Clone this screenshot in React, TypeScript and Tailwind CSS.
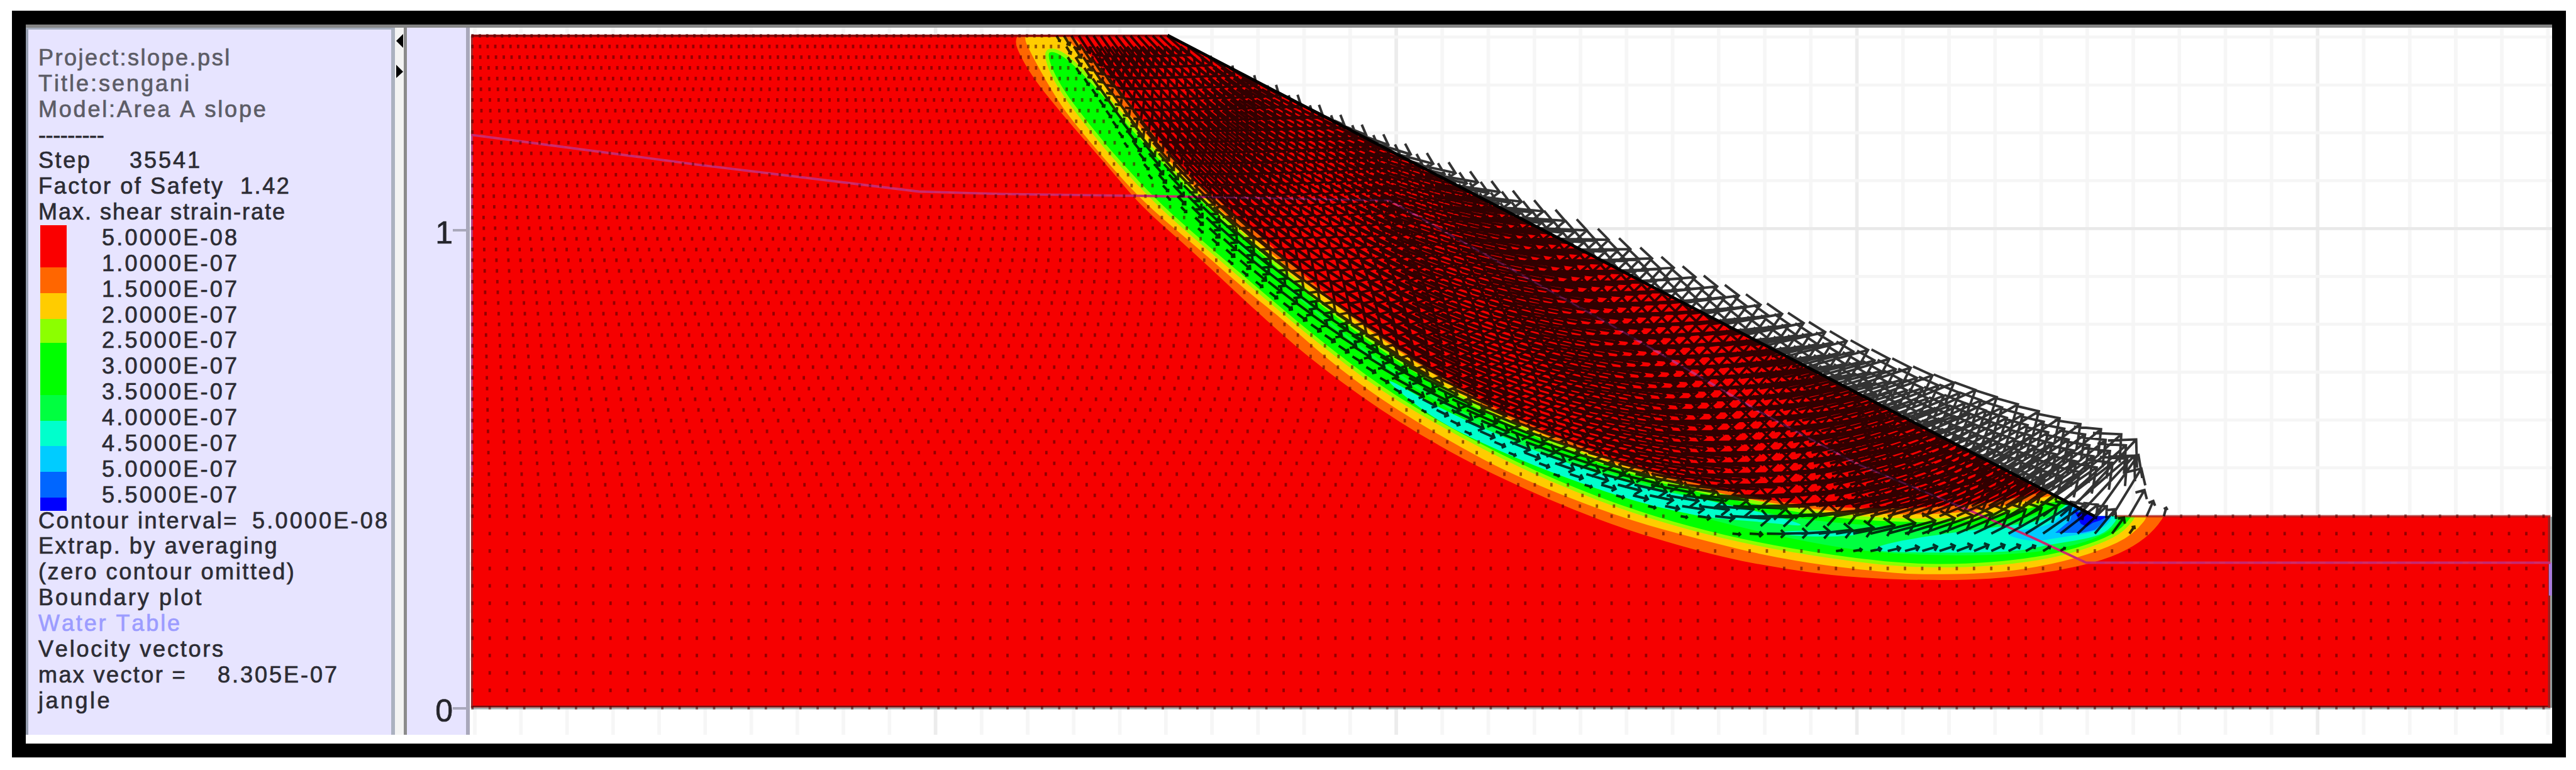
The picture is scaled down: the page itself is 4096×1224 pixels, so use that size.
import React from "react";

const legend = [
  "5.0000E-08",
  "1.0000E-07",
  "1.5000E-07",
  "2.0000E-07",
  "2.5000E-07",
  "3.0000E-07",
  "3.5000E-07",
  "4.0000E-07",
  "4.5000E-07",
  "5.0000E-07",
  "5.5000E-07",
];

const swatches = [
  "h-[67px] bg-[#fa0000]",
  "h-[41px] bg-[#ff6600]",
  "h-[41px] bg-[#ffcc00]",
  "h-[38px] bg-[#8cff00]",
  "h-[83px] bg-[#00ff00]",
  "h-[41px] bg-[#00ff40]",
  "h-[40px] bg-[#00ffcc]",
  "h-[41px] bg-[#00ccff]",
  "h-[41px] bg-[#0066ff]",
  "h-[21px] bg-[#0000ff]",
];

type Point = [number, number];

// Plot geometry
const LEFT = 790;
const RIGHT = 4275;
const TOP = 59;
const BENCH = 865;
const BASE = 1186;
const CREST = 1957;
const TOE = 3511;

// Slip circle
const CX = 3250;
const CY = -801;
const R = 1772;

const orange: Point[] = [
  [1692, 50], [1720, 116], [1784, 196], [1858, 280], [1912, 345], [2002, 424], [2105, 521],
  [2208, 612], [2355, 715], [2504, 797], [2688, 876], [2860, 928], [2980, 952], [3095, 967],
  [3210, 972], [3296, 972], [3376, 967], [3451, 956], [3526, 939], [3577, 916], [3612, 888],
  [3636, 852], [3540, 800], [3434, 822], [3388, 833], [3330, 843], [3244, 850], [3130, 853], [3015, 846],
  [2918, 829], [2745, 785], [2602, 729], [2487, 675], [2381, 609], [2289, 544], [2208, 481],
  [2134, 414], [2076, 364], [2002, 303], [1939, 234], [1875, 146], [1830, 97], [1792, 50],
];

const yellow: Point[] = [
  [1709, 50], [1736, 105], [1772, 167], [1801, 207], [1870, 288], [1927, 348], [2013, 420],
  [2088, 486], [2151, 536], [2225, 602], [2315, 670], [2430, 740], [2544, 800], [2717, 868],
  [2860, 907], [2960, 931], [3061, 948], [3153, 958], [3210, 963], [3342, 961], [3440, 946],
  [3520, 923], [3577, 896], [3610, 852], [3540, 810], [3450, 828], [3380, 843], [3302, 858], [3216, 863],
  [3089, 859], [2990, 846], [2900, 831], [2831, 813], [2717, 780], [2602, 736], [2487, 681],
  [2340, 586], [2231, 506], [2151, 442], [2094, 392], [2020, 331], [1960, 270], [1896, 196],
  [1840, 125], [1785, 60], [1775, 50],
];

const green: Point[] = [
  [1750, 88], [1772, 142], [1824, 211], [1876, 273], [1944, 345], [2030, 420], [2117, 494],
  [2205, 568], [2315, 652], [2430, 720], [2544, 779], [2659, 829], [2774, 869], [2889, 900],
  [3004, 923], [3130, 941], [3210, 948], [3296, 948], [3376, 942], [3451, 930], [3520, 909],
  [3560, 888], [3586, 852], [3540, 830], [3470, 830], [3440, 839], [3376, 855], [3302, 870], [3216, 873],
  [3089, 867], [2975, 849], [2831, 819], [2717, 787], [2602, 742], [2487, 688], [2372, 622],
  [2286, 562], [2200, 497], [2094, 403], [2025, 345], [1973, 294], [1904, 222], [1853, 160],
  [1800, 104], [1768, 82],
];

const spring: Point[] = [
  [1965, 326], [2060, 395], [2160, 486], [2260, 570], [2370, 650], [2500, 728], [2640, 797],
  [2780, 847], [2920, 885], [3080, 918], [3190, 930], [3370, 931], [3480, 915], [3540, 890],
  [3560, 862], [3480, 842], [3400, 868], [3290, 884], [3140, 882], [3000, 868], [2860, 838],
  [2700, 795], [2540, 733], [2400, 664], [2270, 574], [2150, 474], [2060, 392],
];

const aqua: Point[][] = [
  [
    [2305, 622], [2401, 678], [2515, 731], [2630, 778], [2745, 814], [2860, 838], [2960, 860],
    [3040, 884], [2946, 874], [2860, 868], [2745, 842], [2630, 803], [2515, 757], [2401, 702],
  ],
  [[2976, 889], [3120, 889], [3110, 899], [3000, 899]],
  [
    [3131, 922], [3176, 907], [3290, 890], [3359, 882], [3434, 871], [3463, 845], [3480, 835],
    [3556, 858], [3535, 890], [3503, 902], [3434, 913], [3371, 926], [3187, 926],
  ],
];

const sky: Point[] = [
  [3349, 892], [3440, 882], [3463, 850], [3480, 838], [3548, 858], [3524, 890], [3451, 901], [3405, 909],
];
const blue: Point[] = [[3445, 893], [3470, 872], [3476, 850], [3540, 862], [3512, 888], [3490, 893]];
const navy: Point[] = [[3478, 858], [3500, 860], [3535, 864], [3520, 872], [3508, 876], [3498, 883], [3488, 878]];

const waterTable: Point[] = [
  [790, 226], [1170, 276], [1540, 321], [1680, 325], [1900, 328], [2329, 336], [2478, 420],
  [2717, 554], [2946, 688], [3112, 777], [3296, 853], [3405, 900], [3497, 943], [4275, 943],
];

// Direction and length of the vectors along the free surface
const surface = [
  { x: 1700, angle: 1.1, length: 34 },
  { x: 1850, angle: 0.95, length: 44 },
  { x: 1990, angle: 0.66, length: 50 },
  { x: 2100, angle: 0.5, length: 56 },
  { x: 2250, angle: 0.37, length: 62 },
  { x: 2400, angle: 0.18, length: 72 },
  { x: 2700, angle: -0.05, length: 88 },
  { x: 3100, angle: -0.32, length: 112 },
  { x: 3350, angle: -0.6, length: 138 },
  { x: 3460, angle: -0.76, length: 156 },
  { x: 3511, angle: -0.95, length: 146 },
  { x: 3540, angle: -1.02, length: 118 },
  { x: 3568, angle: -1.04, length: 72 },
  { x: 3597, angle: -1.15, length: 46 },
  { x: 3626, angle: -1.3, length: 30 },
  { x: 3660, angle: -1.4, length: 15 },
];

const poly = (points: Point[]) => points.map((p) => p.join(",")).join(" ");

// Closed outline rounded through the midpoints of its sides
const smooth = (points: Point[]) => {
  const mid = (a: Point, b: Point) => `${(a[0] + b[0]) / 2} ${(a[1] + b[1]) / 2}`;
  const last = points[points.length - 1];
  return (
    `M${mid(last, points[0])}` +
    points
      .map((p, i) => `Q${p[0]} ${p[1]} ${mid(p, points[(i + 1) % points.length])}`)
      .join("") +
    "Z"
  );
};

const clamp = (v: number) => Math.max(0, Math.min(1, v));

const sample = (x: number) => {
  if (x <= surface[0].x) return surface[0];
  for (let i = 1; i < surface.length; i++) {
    const a = surface[i - 1];
    const b = surface[i];
    if (x <= b.x) {
      const t = (x - a.x) / (b.x - a.x);
      return {
        x,
        angle: a.angle + (b.angle - a.angle) * t,
        length: a.length + (b.length - a.length) * t,
      };
    }
  }
  return surface[surface.length - 1];
};

const groundLevel = (x: number) => {
  if (x < CREST) return TOP;
  if (x > TOE) return BENCH;
  return TOP + ((x - CREST) / (TOE - CREST)) * (BENCH - TOP);
};

// Grid nodes: a fanned block above the bench, a regular one below it
const meshNodes = () => {
  const nodes: Point[] = [];
  for (let row = 0; row < 45; row++) {
    const f = row / 45;
    const end = CREST + (TOE - CREST) * f;
    for (let col = 0; col <= 94; col++) {
      nodes.push([LEFT + 2 + ((end - LEFT - 2) * col) / 94, TOP + 1 + (BENCH - TOP) * f]);
    }
  }
  for (let row = 0; row <= 11; row++) {
    for (let x = LEFT + 2; x <= RIGHT; x += 28.93) {
      nodes.push([x, BENCH + (row * (BASE - BENCH)) / 11]);
    }
  }
  return nodes;
};

const buildField = () => {
  let arrows = "";
  let ticks = "";
  meshNodes().forEach(([x, y]) => {
    const d = R - Math.hypot(x - CX, y - CY);
    const { angle, length } = sample(x);
    const k = clamp((d - (x < 2900 ? 34 : 24)) / 80);
    const size = length * k * k * (3 - 2 * k);
    if (size < 7 || x > 3650) {
      ticks += `M${x.toFixed(1)} ${(y - 3).toFixed(1)}v6`;
      return;
    }
    const bottom = CY + Math.sqrt(R * R - (x - CX) ** 2);
    const up = groundLevel(x);
    const t = clamp((bottom - y) / (bottom - up)) ** (1 - 0.75 * clamp((x - 2700) / 400));
    const slip = Math.atan2(CX - x, y - CY);
    const a = slip + (angle - slip) * t;
    const tx = x + size * Math.cos(a);
    const ty = y + size * Math.sin(a);
    const barb = size * 0.31;
    const p = (da: number) =>
      `${(tx - barb * Math.cos(a + da)).toFixed(1)} ${(ty - barb * Math.sin(a + da)).toFixed(1)}`;
    arrows += `M${x.toFixed(1)} ${y.toFixed(1)}L${tx.toFixed(1)} ${ty.toFixed(1)}M${p(0.78)}L${tx.toFixed(1)} ${ty.toFixed(1)}L${p(-0.78)}`;
  });
  return { arrows, ticks };
};

const field = buildField();

const ground = poly([
  [LEFT, TOP], [CREST, TOP], [TOE, BENCH], [RIGHT, BENCH], [RIGHT, BASE], [LEFT, BASE],
]);

const Plot: React.FC = () => (
  <svg
    className="block h-[1124px] w-[3311px] shrink-0 bg-white"
    viewBox="787.5 46.4 3490.4 1184.9"
    preserveAspectRatio="none"
  >
    <defs>
      <clipPath id="ground">
        <polygon points={ground} />
      </clipPath>
    </defs>

    {/* Grid */}
    {Array.from({ length: 46 }, (_, i) => (
      <line
        key={i}
        x1={796 + i * 77.22}
        x2={796 + i * 77.22}
        y1="46"
        y2="1232"
        stroke={i % 10 === 0 && i > 0 ? "#ececec" : "#f6f6f6"}
        strokeWidth="6"
      />
    ))}
    {Array.from({ length: 15 }, (_, i) => (
      <line
        key={i}
        x1="787"
        x2="4278"
        y1={1185 - i * 80.2}
        y2={1185 - i * 80.2}
        stroke={i === 10 ? "#e9e9e9" : "#f5f5f5"}
        strokeWidth="5"
      />
    ))}

    {/* Strain-rate contours */}
    <g clipPath="url(#ground)">
      <rect x={LEFT} y={TOP} width={RIGHT - LEFT} height={BASE - TOP} fill="#f60000" />
      <path d={smooth(orange)} fill="#ff6600" />
      <path d={smooth(yellow)} fill="#ffcc00" />
      <path d={smooth(green)} fill="#00ff00" stroke="#8cff00" strokeWidth="6" />
      <path d={smooth(spring)} fill="#00ff40" />
      {aqua.map((shape, i) => (
        <path key={i} d={smooth(shape)} fill="#00ffcc" />
      ))}
      <path d={smooth(sky)} fill="#00ccff" />
      <polygon points={poly(blue)} fill="#0066ff" />
      <polygon points={poly(navy)} fill="#0000ff" />
    </g>

    {/* Boundary */}
    <path d={`M${LEFT} ${TOP + 1}H${CREST}`} stroke="#8c0a0a" strokeWidth="4" />
    <path d={`M${CREST} ${TOP}L${TOE} ${BENCH}`} stroke="#000" strokeWidth="5" />
    <path d={`M3545 ${BENCH}H${RIGHT}`} stroke="#a81818" strokeOpacity="0.700" strokeWidth="4" />
    <path d={`M${LEFT} ${BASE - 2}H${RIGHT}`} stroke="#6e1414" strokeWidth="3" />
    <path d={`M${LEFT} ${BASE + 1}H${RIGHT}`} stroke="#a3aeae" strokeWidth="3" />
    <path d="M4273 866V1186" stroke="#9a2020" strokeWidth="4" />
    <path d="M4276.500 866V1186" stroke="#8f9a9a" strokeWidth="3" />
    <path d="M791 60V1186" stroke="#9c2a2a" strokeWidth="3" />
    <path d="M791 226V800" stroke="#b04a9c" strokeWidth="2.500" />
    <path d="M4275 943V998" stroke="#a878e0" strokeWidth="5" />

    <polyline points={poly(waterTable)} fill="none" stroke="#d02c68" strokeWidth="4" />

    {/* Velocity vectors */}
    <path d={field.ticks} stroke="#500000" strokeOpacity="0.580" strokeWidth="4" fill="none" />
    <path d={field.arrows} stroke="#000" strokeOpacity="0.800" strokeWidth="4.200" fill="none" />
    <polyline
      points={poly(waterTable)}
      fill="none"
      stroke="#b0208c"
      strokeOpacity="0.350"
      strokeDasharray="14 10"
      strokeWidth="2.500"
    />
  </svg>
);

const Info: React.FC = () => (
  <div className="h-[1124px] w-[587px] shrink-0 border-t-[3px] border-r-[6px] border-l-[4px] border-t-[#a5adbd] border-r-[#abb1c0] border-l-[#969eb0] bg-[#e7e4ff] pt-[25px] pl-[16px] text-[36px] leading-[40.860px] whitespace-pre text-[#2c2c34] [-webkit-text-stroke:0.7px] [font-kerning:none]">
    <div className="text-[#5c5c66]">
      <p className="tracking-[2.5px]">Project:slope.psl</p>
      <p className="tracking-[3px]">Title:sengani</p>
      <p className="tracking-[2.8px]">Model:Area A slope</p>
    </div>
    <p className="tracking-[-0.4px] text-[#2c2c34]">---------</p>
    <p className="flex">
      <span className="w-[145px] tracking-[2.6px]">Step</span>
      <span className="tracking-[3px]">35541</span>
    </p>
    <p className="tracking-[2.6px]">Factor of Safety  1.42</p>
    <p className="tracking-[2px]">Max. shear strain-rate</p>

    {/* Colour key */}
    <div className="flex h-[449.500px]">
      <div className="ml-[3px] w-[42px]">
        {swatches.map((swatch, index) => (
          <div key={index} className={swatch} />
        ))}
      </div>
      <div className="ml-[56px] tracking-[3.2px]">
        {legend.map((value) => (
          <p key={value}>{value}</p>
        ))}
      </div>
    </div>

    <p className="flex">
      <span className="w-[340px] tracking-[2.5px]">Contour interval=</span>
      <span className="tracking-[3.2px]">5.0000E-08</span>
    </p>
    <p className="tracking-[2.6px]">Extrap. by averaging</p>
    <p className="tracking-[2.6px]">(zero contour omitted)</p>
    <p className="tracking-[3.1px]">Boundary plot</p>
    <p className="tracking-[2.9px] text-[#9c9cff]">Water Table</p>
    <p className="tracking-[2.8px]">Velocity vectors</p>
    <p className="flex">
      <span className="w-[285px] tracking-[2.4px]">max vector =</span>
      <span className="tracking-[3px]">8.305E-07</span>
    </p>
    <p className="tracking-[3.5px]">jangle</p>
  </div>
);

const App: React.FC = () => {
  return (
    <div className="h-[1224px] w-[4096px] overflow-hidden bg-white pt-[17px] pl-[19px] font-['Liberation_Sans',Arial,sans-serif]">
      <div className="h-[1187px] w-[4061px] border-[22px] border-black bg-white">
        <div className="h-[5px] bg-[#858585]" />
        <div className="flex">
          <Info />

          {/* Splitter */}
          <div className="h-[1124px] w-[14px] shrink-0 bg-[#f3f3f3]">
            <svg className="block h-[100px] w-[14px]" viewBox="0 0 14 100">
              <polygon points="13,10 13,32 2,21" fill="#000" />
              <polygon points="2,59 2,80 13,70" fill="#000" />
            </svg>
          </div>
          <div className="h-[1124px] w-[5px] shrink-0 bg-[#8b8b8b]" />

          {/* Vertical axis */}
          <div className="flex h-[1124px] w-[100px] shrink-0 flex-col items-end border-r-[6px] border-[#a9a8bb] bg-[#e7e4ff] pt-[298px] text-[50px] leading-[56px] text-[#25252c] [-webkit-text-stroke:0.7px]">
            <div className="flex h-[56px] items-center">
              <span>1</span>
              <span className="mb-[8px] h-[4px] w-[21px] bg-[#a9a8bb]" />
            </div>
            <div className="mt-[704px] flex h-[56px] items-center">
              <span>0</span>
              <span className="mb-[8px] h-[4px] w-[21px] bg-[#a9a8bb]" />
            </div>
          </div>

          <Plot />
        </div>
      </div>
    </div>
  );
};

export default App;
